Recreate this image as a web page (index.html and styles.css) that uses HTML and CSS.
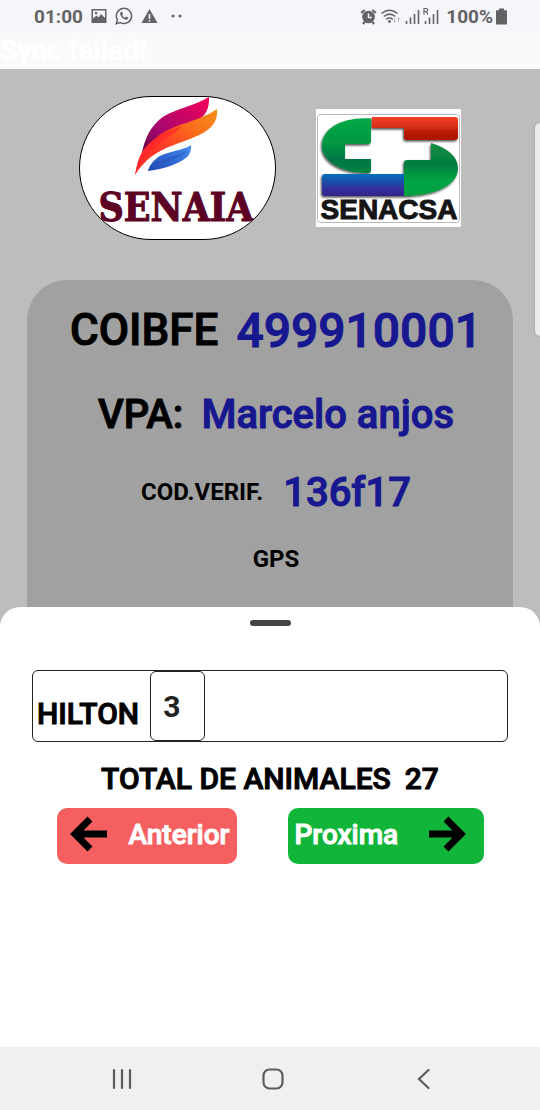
FILE: index.html
```html
<!DOCTYPE html>
<html lang="es">
<head>
<meta charset="utf-8">
<meta name="viewport" content="width=device-width, initial-scale=1">
<title>COIBFE</title>
<link rel="stylesheet" href="styles.css">
</head>
<body>
<div class="app">
  <header class="status">
    <div class="status-group">
      <span class="clock">01:00</span>
      <svg width="16" height="16" viewBox="0 0 16 16"><path fill="#636366" fill-rule="evenodd" d="M.5 1h15v14H.5zM2 2.500v8l3.500-3 2 2 2.500-3.500 4 4v-7.500zM4 4h2.200v2.200H4z"/></svg>
      <svg width="18" height="18" viewBox="0 0 18 18"><path fill="none" stroke="#636366" stroke-width="1.500" d="M1.300 16.700l1.100-4A7.600 7.600 0 1 1 5.400 15.600z"/><path fill="#636366" d="M6.300 4.700c-1.400.6-1.500 2.300-.5 4 1.200 2 2.900 3.600 5.200 4 1.300.1 2.400-.8 2.300-1.900l-2-1.200-1.200 1.200c-1.400-.6-2.300-1.500-2.900-2.800l.8-1-.9-2.200z"/></svg>
      <svg width="17" height="16" viewBox="0 0 17 16"><path fill="#636366" fill-rule="evenodd" d="M8.500 1L16.500 15H.5zM7.700 6v5h1.600V6zM7.700 12.200v1.500h1.600v-1.500z"/></svg>
      <svg class="dots" width="12" height="4" viewBox="0 0 12 4"><circle cx="2" cy="2" r="1.500" fill="#636366"/><circle cx="9" cy="2" r="1.500" fill="#636366"/></svg>
    </div>
    <div class="status-group right">
      <svg width="17" height="17" viewBox="0 0 17 17"><circle cx="8.500" cy="9" r="6.300" fill="#636366"/><path d="M1.200 5l3.500-3M15.800 5l-3.500-3M4.500 14l-1.500 2M12.500 14l1.500 2" stroke="#636366" stroke-width="2.200"/><path d="M8.500 5.500V9.500h3.300" fill="none" stroke="#f6f6fa" stroke-width="1.500"/></svg>
      <svg width="22" height="17" viewBox="0 0 22 17"><g fill="none" stroke="#636366" stroke-width="1.600"><path d="M1.500 5.500q8-6.500 16 0M3.800 8.500q5.700-4.600 11.400 0M6.200 11.300q3.300-2.600 6.600 0"/></g><circle cx="9.500" cy="13.500" r="1.400" fill="#636366"/><path d="M14.500 10v4m-1.300-1.200l1.300 1.400 1.300-1.400M18.500 14v-4m-1.300 1.200l1.300-1.400 1.300 1.400" fill="none" stroke="#b5b5ba"/></svg>
      <svg width="15" height="17" viewBox="0 0 15 17"><path d="M1.500 13v3M5.500 9.500V16M9.500 6v10M13.500 2v14" stroke="#636366" stroke-width="1.600"/></svg>
      <svg width="16" height="19" viewBox="1 0 16 19"><path d="M3.500 14v3M7.500 10.500V17M11.500 7v10M15.500 3v14" stroke="#636366" stroke-width="1.600"/><path d="M2 7.500V1.500h2.200a1.500 1.500 0 0 1 0 3H2m2.200 0l1.700 3" fill="none" stroke="#636366" stroke-width="1.200"/></svg>
      <span class="percent">100%</span>
      <svg width="11" height="17" viewBox="0 0 11 17"><path fill="#636366" d="M3 .5h5v1.800h2.200q.8 0 .8.800v12.600q0 .8-.8.800H.800q-.8 0-.8-.8V3.100q0-.8.800-.8H3z"/></svg>
    </div>
  </header>
  <div class="banner">Sync failed!</div>

  <main class="content">
    <div class="logos">
      <div class="logo-senaia">
        <svg width="195" height="142" viewBox="0 0 195 142">
          <defs>
            <linearGradient id="pink" x1="0" y1="1" x2="1" y2="0"><stop offset="0" stop-color="#5c0038"/><stop offset=".35" stop-color="#a5086f"/><stop offset="1" stop-color="#f3005a"/></linearGradient>
            <linearGradient id="fire" x1="0" y1="1" x2="1" y2="0"><stop offset="0" stop-color="#ff2a28"/><stop offset=".4" stop-color="#ff3a28"/><stop offset=".65" stop-color="#fa661c"/><stop offset="1" stop-color="#f39219"/></linearGradient>
            <linearGradient id="sky" x1="0" y1="1" x2="1" y2="0"><stop offset="0" stop-color="#2047ae"/><stop offset=".5" stop-color="#326bd5"/><stop offset="1" stop-color="#448ef0"/></linearGradient>
          </defs>
          <path fill="url(#pink)" d="M129 0C112 10 90 13 79 23C67 34 64 46 61 60C78 44 87 36 99 31C115 25 130 22 129 0Z"/>
          <path fill="url(#fire)" d="M137 12C119 25 91 27 76 41C58 54 58 65 55 78C65 62 77 54 94 48C117 39 139 34 137 12Z"/>
          <path fill="#ff202b" opacity=".6" d="M55 78C58 62 62 52 76 41C84 34 94 32 102 29C88 44 65 50 55 78Z"/>
          <path fill="url(#sky)" d="M111 48C104 54 84 54 76 62C70 67 69 71 68 74C86 72 100 66 107 60C111 56 111 52 111 48Z"/>
          <path fill="#2852b9" opacity=".55" d="M68 74C74 62 91 61 107 54C93 66 78 66 68 74Z"/>
          <text class="senaia-text" x="96" y="124">SENAIA</text>
        </svg>
      </div>
      <svg class="logo-senacsa" width="145" height="118" viewBox="0 0 145 118">
        <defs>
          <linearGradient id="gl" x1="0" y1="0" x2="0" y2="1"><stop offset="0" stop-color="#00a944"/><stop offset=".45" stop-color="#079743"/><stop offset=".75" stop-color="#007744"/><stop offset="1" stop-color="#078440"/></linearGradient>
          <linearGradient id="gr" x1="0" y1="0" x2="0" y2="1"><stop offset="0" stop-color="#169044"/><stop offset=".4" stop-color="#007c40"/><stop offset=".7" stop-color="#00a443"/><stop offset="1" stop-color="#07a040"/></linearGradient>
          <linearGradient id="rd" x1="0" y1="0" x2="0" y2="1"><stop offset="0" stop-color="#f04024"/><stop offset=".4" stop-color="#dc321b"/><stop offset=".65" stop-color="#b71c04"/><stop offset="1" stop-color="#ac1500"/></linearGradient>
          <linearGradient id="bl" x1="0" y1="0" x2="0" y2="1"><stop offset="0" stop-color="#0072bd"/><stop offset=".65" stop-color="#30319b"/><stop offset="1" stop-color="#34238b"/></linearGradient>
          <filter id="sh" x="-10%" y="-10%" width="120%" height="125%"><feDropShadow dx="-1" dy="1.500" stdDeviation="1" flood-opacity=".7"/></filter>
        </defs>
        <rect width="145" height="118" fill="#fff"/>
        <rect x="1.500" y="5.500" width="142" height="108" rx="3" fill="none" stroke="#b9b9b9"/>
        <g filter="url(#sh)">
          <path fill="url(#gl)" d="M55 9.500C25 8 6 20 6 37C6 53 27 64 52 64Q55 64 55 61V50H29V35H52Q55 35 55 32Z"/>
          <path fill="url(#rd)" d="M56 8H139Q142 8 142 11V28Q142 31 139 31H91Q88 31 88 28V19H56Z"/>
          <path fill="url(#gr)" d="M115 34C132 39 142 48 142 59C142 78 115 87 88 87V54Q88 51 91 51H115Z"/>
          <path fill="url(#bl)" d="M9 65H88V87H9Q6 87 6 84V68Q6 65 9 65Z"/>
        </g>
        <text class="senacsa-text" x="73" y="110">SENACSA</text>
      </svg>
    </div>
    <section class="card">
      <p class="row code"><span>COIBFE</span><strong>499910001</strong></p>
      <p class="row name"><span>VPA:</span><strong>Marcelo anjos</strong></p>
      <p class="row verif"><span>COD.VERIF.</span><strong>136f17</strong></p>
      <p class="row gps">GPS</p>
    </section>
    <div class="edge-handle"></div>
  </main>

  <section class="sheet">
    <div class="grip"></div>
    <div class="field">
      <label for="hilton">HILTON</label>
      <input id="hilton" type="text" inputmode="numeric" value="3">
    </div>
    <p class="total"><span>TOTAL DE ANIMALES</span><span>27</span></p>
    <div class="actions">
      <button class="btn prev" type="button">
        <svg width="38" height="36" viewBox="0 0 38 36"><path d="M37 18H6M20 3L5 18l15 15" fill="none" stroke="#000" stroke-width="7"/></svg>
        Anterior
      </button>
      <button class="btn next" type="button">
        Proxima
        <svg width="38" height="36" viewBox="0 0 38 36"><path d="M1 18h31M18 3L33 18 18 33" fill="none" stroke="#000" stroke-width="7"/></svg>
      </button>
    </div>
  </section>

  <nav class="navbar">
    <button type="button" aria-label="Recientes"><svg width="24" height="24" viewBox="0 0 24 24"><path d="M4 3v18M12 3v18M20 3v18" stroke="#5c5c5c" stroke-width="2.200" stroke-linecap="round"/></svg></button>
    <button type="button" aria-label="Inicio"><svg width="24" height="24" viewBox="0 0 24 24"><rect x="2.500" y="2.500" width="19" height="19" rx="6" fill="none" stroke="#5c5c5c" stroke-width="2.200"/></svg></button>
    <button type="button" aria-label="Atrás"><svg width="24" height="24" viewBox="0 0 24 24"><path d="M16.500 3L7 12l9.500 9" fill="none" stroke="#5c5c5c" stroke-width="2.200" stroke-linecap="round"/></svg></button>
  </nav>
</div>
</body>
</html>
```
FILE: styles.css
```css
* { box-sizing: border-box; }
body { margin: 0; font-family: Roboto, "Liberation Sans", sans-serif; color: #000; }
p { margin: 0; }
svg { display: block; flex: none; }
button { font: inherit; border: 0; cursor: pointer; }
.app { display: flex; flex-direction: column; min-height: 100vh; }

.status { display: flex; justify-content: space-between; align-items: center; height: 32px; padding: 0 33px 0 34px; background: #f6f6fa; color: #636366; font-size: 19px; font-weight: 700; }
.status-group { display: flex; align-items: center; gap: 8px; }
.status-group.right { gap: 3px; }
.percent { margin-left: 4px; }
.dots { margin-left: 5px; }

.banner { height: 37px; background: #fafafa; color: #fff; font-size: 28px; font-weight: 700; line-height: 38px; }

.content { position: relative; padding: 27px 27px 0; background: #bdbdbd; }
.logos { display: flex; justify-content: center; align-items: center; gap: 40px; margin-bottom: 40px; }
.logo-senaia { overflow: hidden; border: 1px solid #000; border-radius: 72px; background: #fff; }
.senaia-text { font: bold 39px "DejaVu Serif Condensed", "DejaVu Serif", serif; fill: #5c0222; stroke: #5c0222; stroke-width: 1px; text-anchor: middle; }
.senacsa-text { font: bold 28px "Liberation Sans", sans-serif; fill: #151515; stroke: #151515; stroke-width: 1px; text-anchor: middle; }

.card { display: flex; flex-direction: column; padding: 20px 0 27px 12px; border-radius: 40px 40px 0 0; background: #a1a1a1; }
.row { display: flex; justify-content: center; align-items: center; font-weight: 500; -webkit-text-stroke: 1px currentColor; }
.row strong { color: #17178f; font-weight: 500; }
.code { height: 60px; gap: 18px; font-size: 44px; }
.code strong { font-size: 48px; }
.name { height: 108px; gap: 18px; font-size: 40px; }
.verif, .gps { font-size: 24px; font-weight: 700; -webkit-text-stroke-width: 0; }
.verif { height: 48px; gap: 20px; }
.verif strong { font-size: 40px; -webkit-text-stroke-width: 1px; }
.gps { height: 86px; }
.edge-handle { position: absolute; top: 54px; right: 0; width: 5px; height: 213px; border-radius: 5px 0 0 5px; background: #ececec; box-shadow: 0 0 2px #888; }

.sheet { position: relative; flex: 1; margin-top: -22px; padding: 13px 32px 24px; border-radius: 20px 20px 0 0; background: #fff; }
.grip { width: 41px; height: 6px; margin: 0 auto 44px; border-radius: 3px; background: #444; }
.field { display: flex; align-items: center; gap: 11px; height: 72px; padding-left: 4px; border: 1px solid #222; border-radius: 6px; }
.field label { padding-top: 14px; font-size: 30px; font-weight: 500; }
.field input { width: 55px; height: 70px; padding: 0 12px; border: 1px solid #222; border-radius: 6px; background: #fff; color: #222; font: 700 30px Roboto, "Liberation Sans", sans-serif; }
.total { display: flex; justify-content: center; gap: 14px; margin: 19px 0 11px; font-size: 30px; font-weight: 500; line-height: 36px; }
.actions { display: flex; justify-content: center; gap: 51px; }
.btn { display: flex; align-items: center; justify-content: space-between; height: 56px; padding: 0 7px 4px; border-radius: 10px; color: #fff; font-size: 28px; font-weight: 500; }
.field label, .total, .btn { -webkit-text-stroke: 1px currentColor; }
.prev { width: 180px; padding-left: 13px; background: #f55f5f; }
.next { width: 196px; padding-right: 18px; background: #10b539; }

.navbar { display: flex; justify-content: space-around; align-items: center; height: 63px; padding: 0 40px 0 46px; background: #f0f0f0; }
.navbar button { padding: 12px 24px; background: none; }
```
